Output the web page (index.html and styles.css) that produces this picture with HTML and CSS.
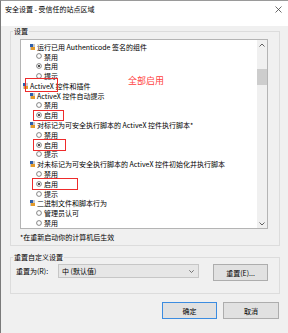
FILE: index.html
```html
<!DOCTYPE html>
<html lang="zh-CN">
<head>
<meta charset="utf-8">
<title>安全设置 - 受信任的站点区域</title>
<link rel="stylesheet" href="styles.css">
</head>
<body>
<div class="win">
  <div class="titlebar">
    <span class="title">安全设置 - 受信任的站点区域</span>
    <svg class="close" width="7" height="7" viewBox="0 0 7 7"><path d="M0.5 0.5L6.5 6.5M6.5 0.5L0.5 6.5" stroke="#444" stroke-width="0.8" fill="none"/></svg>
  </div>
  <div class="content">
    <div class="group settings">
      <span class="legend">设置</span>
      <div class="listbox">
        <div class="tree">
          <div class="row l1"><svg class="ico" width="5" height="6" viewBox="0 0 5 6"><rect x="0" y="0" width="5" height="6" fill="#c9c9c9"/><rect x="0" y="0" width="3" height="3" fill="#2f5faa"/><rect x="1" y="3" width="4" height="3" fill="#e39a2b"/></svg><span>运行已用 Authenticode 签名的组件</span></div>
          <div class="row l2"><svg class="radio" width="6" height="6" viewBox="0 0 6 6"><circle cx="3" cy="3" r="2.4" fill="#fff" stroke="#555" stroke-width="0.7"/></svg><span>禁用</span></div>
          <div class="row l2"><svg class="radio" width="6" height="6" viewBox="0 0 6 6"><circle cx="3" cy="3" r="2.4" fill="#fff" stroke="#555" stroke-width="0.7"/><circle cx="3" cy="3" r="1.1" fill="#222"/></svg><span>启用</span></div>
          <div class="row l2"><svg class="radio" width="6" height="6" viewBox="0 0 6 6"><circle cx="3" cy="3" r="2.4" fill="#fff" stroke="#555" stroke-width="0.7"/></svg><span>提示</span></div>
          <div class="row l0"><svg class="ico" width="5" height="6" viewBox="0 0 5 6"><rect x="0" y="0" width="5" height="6" fill="#c9c9c9"/><rect x="0" y="0" width="3" height="3" fill="#2f5faa"/><rect x="1" y="3" width="4" height="3" fill="#e39a2b"/></svg><span>ActiveX 控件和插件</span></div>
          <div class="row l1"><svg class="ico" width="5" height="6" viewBox="0 0 5 6"><rect x="0" y="0" width="5" height="6" fill="#c9c9c9"/><rect x="0" y="0" width="3" height="3" fill="#2f5faa"/><rect x="1" y="3" width="4" height="3" fill="#e39a2b"/></svg><span>ActiveX 控件自动提示</span></div>
          <div class="row l2"><svg class="radio" width="6" height="6" viewBox="0 0 6 6"><circle cx="3" cy="3" r="2.4" fill="#fff" stroke="#555" stroke-width="0.7"/></svg><span>禁用</span></div>
          <div class="row l2"><svg class="radio" width="6" height="6" viewBox="0 0 6 6"><circle cx="3" cy="3" r="2.4" fill="#fff" stroke="#555" stroke-width="0.7"/><circle cx="3" cy="3" r="1.1" fill="#222"/></svg><span>启用</span></div>
          <div class="row l1"><svg class="ico" width="5" height="6" viewBox="0 0 5 6"><rect x="0" y="0" width="5" height="6" fill="#c9c9c9"/><rect x="0" y="0" width="3" height="3" fill="#2f5faa"/><rect x="1" y="3" width="4" height="3" fill="#e39a2b"/></svg><span>对标记为可安全执行脚本的 ActiveX 控件执行脚本*</span></div>
          <div class="row l2"><svg class="radio" width="6" height="6" viewBox="0 0 6 6"><circle cx="3" cy="3" r="2.4" fill="#fff" stroke="#555" stroke-width="0.7"/></svg><span>禁用</span></div>
          <div class="row l2"><svg class="radio" width="6" height="6" viewBox="0 0 6 6"><circle cx="3" cy="3" r="2.4" fill="#fff" stroke="#555" stroke-width="0.7"/><circle cx="3" cy="3" r="1.1" fill="#222"/></svg><span>启用</span></div>
          <div class="row l2"><svg class="radio" width="6" height="6" viewBox="0 0 6 6"><circle cx="3" cy="3" r="2.4" fill="#fff" stroke="#555" stroke-width="0.7"/></svg><span>提示</span></div>
          <div class="row l1"><svg class="ico" width="5" height="6" viewBox="0 0 5 6"><rect x="0" y="0" width="5" height="6" fill="#c9c9c9"/><rect x="0" y="0" width="3" height="3" fill="#2f5faa"/><rect x="1" y="3" width="4" height="3" fill="#e39a2b"/></svg><span>对未标记为可安全执行脚本的 ActiveX 控件初始化并执行脚本</span></div>
          <div class="row l2"><svg class="radio" width="6" height="6" viewBox="0 0 6 6"><circle cx="3" cy="3" r="2.4" fill="#fff" stroke="#555" stroke-width="0.7"/></svg><span>禁用</span></div>
          <div class="row l2"><svg class="radio" width="6" height="6" viewBox="0 0 6 6"><circle cx="3" cy="3" r="2.4" fill="#fff" stroke="#555" stroke-width="0.7"/><circle cx="3" cy="3" r="1.1" fill="#222"/></svg><span>启用</span></div>
          <div class="row l2"><svg class="radio" width="6" height="6" viewBox="0 0 6 6"><circle cx="3" cy="3" r="2.4" fill="#fff" stroke="#555" stroke-width="0.7"/></svg><span>提示</span></div>
          <div class="row l1"><svg class="ico" width="5" height="6" viewBox="0 0 5 6"><rect x="0" y="0" width="5" height="6" fill="#c9c9c9"/><rect x="0" y="0" width="3" height="3" fill="#2f5faa"/><rect x="1" y="3" width="4" height="3" fill="#e39a2b"/></svg><span>二进制文件和脚本行为</span></div>
          <div class="row l2"><svg class="radio" width="6" height="6" viewBox="0 0 6 6"><circle cx="3" cy="3" r="2.4" fill="#fff" stroke="#555" stroke-width="0.7"/></svg><span>管理员认可</span></div>
          <div class="row l2"><svg class="radio" width="6" height="6" viewBox="0 0 6 6"><circle cx="3" cy="3" r="2.4" fill="#fff" stroke="#555" stroke-width="0.7"/></svg><span>禁用</span></div>
        </div>
        <div class="scrollbar">
          <div class="sb-btn"><svg width="6" height="4" viewBox="0 0 6 4"><path d="M0.5 3.5L3 1L5.5 3.5" stroke="#606060" stroke-width="1" fill="none"/></svg></div>
          <div class="sb-track"><div class="sb-thumb"></div></div>
          <div class="sb-btn down"><svg width="6" height="4" viewBox="0 0 6 4"><path d="M0.5 0.5L3 3L5.5 0.5" stroke="#606060" stroke-width="1" fill="none"/></svg></div>
        </div>
      </div>
      <div class="note">*在重新启动你的计算机后生效</div>
    </div>
    <div class="group reset">
      <span class="legend">重置自定义设置</span>
      <div class="reset-row">
        <span class="reset-label">重置为(R):</span>
        <div class="select"><span>中 (默认值)</span><svg width="5" height="3" viewBox="0 0 5 3"><path d="M0.3 0.3L2.5 2.5L4.7 0.3" stroke="#555" stroke-width="0.8" fill="none"/></svg></div>
        <div class="btn reset-btn">重置(E)...</div>
      </div>
    </div>
    <div class="actions">
      <div class="btn primary">确定</div>
      <div class="btn">取消</div>
    </div>
  </div>
  <div class="mark mark-activex"></div>
  <div class="mark mark-1"></div>
  <div class="mark mark-2"></div>
  <div class="mark mark-3"></div>
  <div class="annot">全部启用</div>
</div>
</body>
</html>
```
FILE: styles.css
```css
* { box-sizing: border-box; margin: 0; padding: 0; }
html, body { width: 288px; height: 333px; overflow: hidden; }
body {
  font-family: "Noto Sans CJK SC", "Microsoft YaHei", sans-serif;
  font-size: 7px;
  color: #000;
  background: #f0f0f0;
}
.win {
  position: relative;
  width: 288px;
  height: 333px;
  border-left: 1px solid #7a7a7a;
  border-top: 1px solid #9a9a9a;
  background: #f0f0f0;
  display: flex;
  flex-direction: column;
}
.titlebar {
  height: 25px;
  flex: none;
  background: #fff;
  display: flex;
  align-items: flex-start;
  justify-content: space-between;
  padding: 3px 6px 0 4px;
  line-height: 10px;
}
.close { margin-top: 1.5px; }
.content {
  flex: 1;
  padding: 5px 8px 0 9px;
  display: flex;
  flex-direction: column;
}
.group {
  position: relative;
  border: 1px solid #dcdcdc;
  width: 270px;
}
.legend {
  position: absolute;
  top: -6px;
  left: 2px;
  padding: 0 1px;
  background: #f0f0f0;
  line-height: 10px;
}
.settings {
  height: 215px;
  padding: 7px 0 0 9px;
}
.listbox {
  width: 248px;
  height: 190px;
  border: 1px solid #b4b4b4;
  background: #fff;
  display: flex;
}
.tree {
  flex: 1;
  padding-top: 1.8px;
  overflow: hidden;
}
.row {
  height: 9.8px;
  display: flex;
  align-items: center;
  white-space: nowrap;
  gap: 2px;
}
.row.l0 { padding-left: 2px; }
.row.l1 { padding-left: 9px; }
.row.l2 { padding-left: 15px; }
.row svg { flex: none; }
.scrollbar {
  width: 10px;
  flex: none;
  background: #f0f0f0;
  display: flex;
  flex-direction: column;
}
.sb-btn {
  height: 10px;
  display: flex;
  align-items: center;
  justify-content: center;
}
.sb-btn.down { height: 8px; }
.sb-track { flex: 1; padding-top: 19px; }
.sb-thumb { height: 16px; background: #cdcdcd; }
.note {
  margin-top: 3px;
  line-height: 10px;
}
.reset {
  margin-top: 11px;
  height: 37px;
  padding: 6px 0 0 5px;
}
.reset-row {
  display: flex;
  align-items: flex-start;
}
.reset-label {
  flex: 0 0 42px;
  line-height: 14px;
}
.select {
  width: 141px;
  height: 14px;
  border: 1px solid #c6c6c6;
  background: #e6e6e6;
  display: flex;
  align-items: center;
  justify-content: space-between;
  padding: 0 4px 0 3px;
  margin-right: 14px;
}
.btn {
  height: 17px;
  border: 1px solid #adadad;
  background: #e1e1e1;
  display: flex;
  align-items: center;
  justify-content: center;
}
.reset-btn { width: 55px; }
.actions {
  margin-top: 8px;
  display: flex;
  justify-content: flex-end;
  gap: 6px;
  padding-right: 1px;
}
.actions .btn { width: 56px; }
.actions .btn.primary { width: 55px; border-color: #3c8ce0; }
.mark {
  position: absolute;
  border: 1px solid #ee2b2b;
}
.mark-activex { left: 24px; top: 77px; width: 33px; height: 14px; }
.mark-1 { left: 32px; top: 109px; width: 31px; height: 11px; }
.mark-2 { left: 32px; top: 138px; width: 33px; height: 12px; }
.mark-3 { left: 31px; top: 177px; width: 46px; height: 12px; }
.annot {
  position: absolute;
  left: 127px;
  top: 74px;
  font-size: 9px;
  line-height: 12px;
  color: #ff3f3f;
}
```
